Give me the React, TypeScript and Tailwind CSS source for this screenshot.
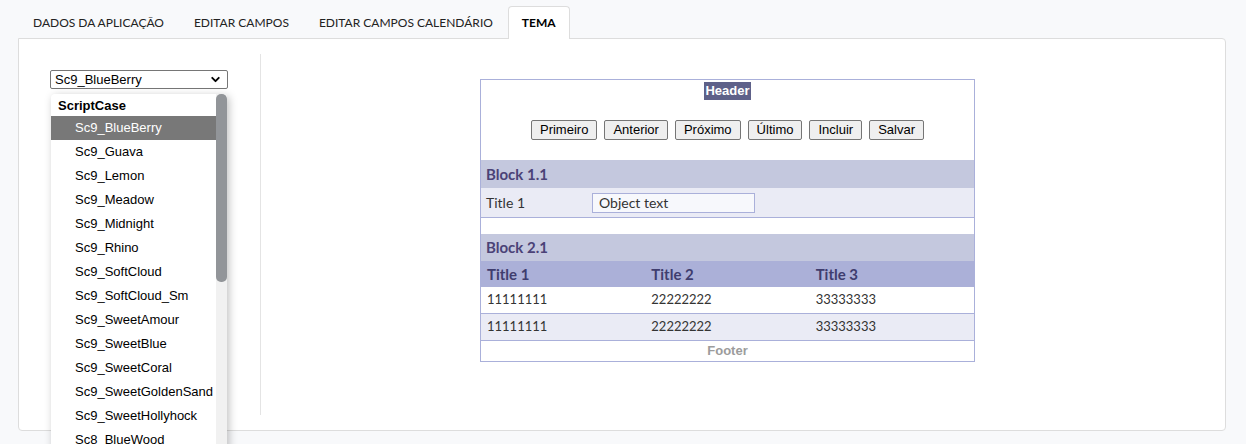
import { ChevronDown } from "lucide-react"

const TABS = ["DADOS DA APLICAÇÃO", "EDITAR CAMPOS", "EDITAR CAMPOS CALENDÁRIO", "TEMA"]

const THEMES = [
  "Sc9_BlueBerry",
  "Sc9_Guava",
  "Sc9_Lemon",
  "Sc9_Meadow",
  "Sc9_Midnight",
  "Sc9_Rhino",
  "Sc9_SoftCloud",
  "Sc9_SoftCloud_Sm",
  "Sc9_SweetAmour",
  "Sc9_SweetBlue",
  "Sc9_SweetCoral",
  "Sc9_SweetGoldenSand",
  "Sc9_SweetHollyhock",
  "Sc8_BlueWood",
]

const NAV_BUTTONS = ["Primeiro", "Anterior", "Próximo", "Último", "Incluir", "Salvar"]

const lato = "font-['Lato','Noto_Sans',sans-serif]"
const arial = "font-['Liberation_Sans',Arial,sans-serif]"

function ThemeSelect() {
  return (
    <div className="relative">
      <div
        className={`flex h-[19px] w-[178px] items-center justify-between rounded-[2px] border border-[#767676] bg-white pl-[4px] pr-[5px] text-[13px] text-black ${arial}`}
      >
        <span>Sc9_BlueBerry</span>
        <ChevronDown className="h-[13px] w-[13px]" strokeWidth={3.5} />
      </div>

      {/* open list */}
      <div
        className={`absolute left-[1px] top-[24px] z-10 w-[176px] overflow-hidden rounded-t-[4px] bg-white shadow-[2px_2px_8px_rgba(0,0,0,0.25)] ${arial}`}
      >
        <div className="flex">
          <div className="flex-1">
            <div className="flex h-[22px] items-end pl-[7px] pb-[1px] text-[13px] font-bold text-black">
              ScriptCase
            </div>
            {THEMES.map((t, i) => (
              <div
                key={t}
                className={`flex h-[24px] items-center pl-[24px] text-[13px] ${
                  i === 0 ? "bg-[#787878] text-white" : "text-black"
                }`}
              >
                {t}
              </div>
            ))}
          </div>
          <div className="w-[11px] bg-[#f1f1f1]">
            <div className="h-[188px] rounded-[5px] bg-[#929599]" />
          </div>
        </div>
      </div>
    </div>
  )
}

function Preview() {
  const cell = "px-[6px]"
  return (
    <div className="w-[495px] border border-[#aab0da] bg-white">
      <div className="flex justify-center pt-[2px]">
        <span className={`bg-[#5e6189] px-[1px] text-[13px] font-bold leading-[18px] text-white ${arial}`}>
          Header
        </span>
      </div>
      <div className="flex justify-center gap-[7px] pb-[20px] pt-[20px]">
        {NAV_BUTTONS.map((b) => (
          <button
            key={b}
            className={`h-[20px] rounded-[2px] border border-[#767676] bg-[#efefef] px-[8px] text-[13px] leading-[18px] text-black ${arial}`}
          >
            {b}
          </button>
        ))}
      </div>

      <div className={lato}>
        <div className="flex h-[28px] items-center bg-[#c4c8de] px-[5px] text-[15px] font-bold text-[#4b4277]">
          Block 1.1
        </div>
        <div className="flex h-[30px] items-center border-b border-[#aab0da] bg-[#eaebf5] px-[5px] text-[14px] text-[#333]">
          <span className="w-[106px]">Title 1</span>
          <div className="flex h-[20px] w-[163px] items-center border border-[#aab0da] bg-[#f7f8fc] px-[6px] text-[14px] text-[#333]">
            Object text
          </div>
        </div>

        <div className="h-[16px]" />

        <div className="flex h-[27px] items-center bg-[#c4c8de] px-[5px] text-[15px] font-bold text-[#4b4277]">
          Block 2.1
        </div>
        <div className="grid h-[26px] grid-cols-3 items-center bg-[#abb0d8] text-[15px] font-bold text-[#3f3d6e]">
          <span className={cell}>Title 1</span>
          <span className={cell}>Title 2</span>
          <span className={cell}>Title 3</span>
        </div>
        {[0, 1].map((r) => (
          <div
            key={r}
            className={`grid h-[27px] grid-cols-3 items-center border-b border-[#aab0da] text-[13px] text-[#333] ${
              r === 1 ? "bg-[#eaebf5]" : "bg-white"
            }`}
          >
            <span className={cell}>11111111</span>
            <span className={cell}>22222222</span>
            <span className={cell}>33333333</span>
          </div>
        ))}
        <div className={`flex h-[20px] items-center justify-center text-[13px] font-bold text-[#9c9c9c] ${arial}`}>
          Footer
        </div>
      </div>
    </div>
  )
}

export default function App() {
  return (
    <div className="h-[444px] w-[1246px] overflow-hidden bg-[#f8f9fb] pt-[6px]">
      {/* Tabs */}
      <div className={`relative z-[1] flex h-[32px] pl-[18px] ${lato}`}>
        {TABS.map((t) => {
          const active = t === "TEMA"
          return (
            <div
              key={t}
              className={`flex h-[33px] items-center text-[12px] ${
                active
                  ? "rounded-t-[4px] border border-b-0 border-[#dddddd] bg-white px-[13px] font-bold text-black"
                  : "px-[15px] text-[#222]"
              }`}
            >
              {t}
            </div>
          )
        })}
      </div>

      {/* Panel */}
      <div className="ml-[18px] flex h-[393px] w-[1208px] rounded-[4px] rounded-tl-none border border-[#dddddd] bg-white">
        <div className="w-[242px] shrink-0 py-[15px]">
          <div className="flex h-full">
            <div className="flex-1 pl-[31px] pt-[16px]">
              <ThemeSelect />
            </div>
            <div className="w-px bg-[#e4e4e4]" />
          </div>
        </div>
        <div className="flex flex-1 items-start pl-[219px] pt-[40px]">
          <Preview />
        </div>
      </div>
    </div>
  )
}
